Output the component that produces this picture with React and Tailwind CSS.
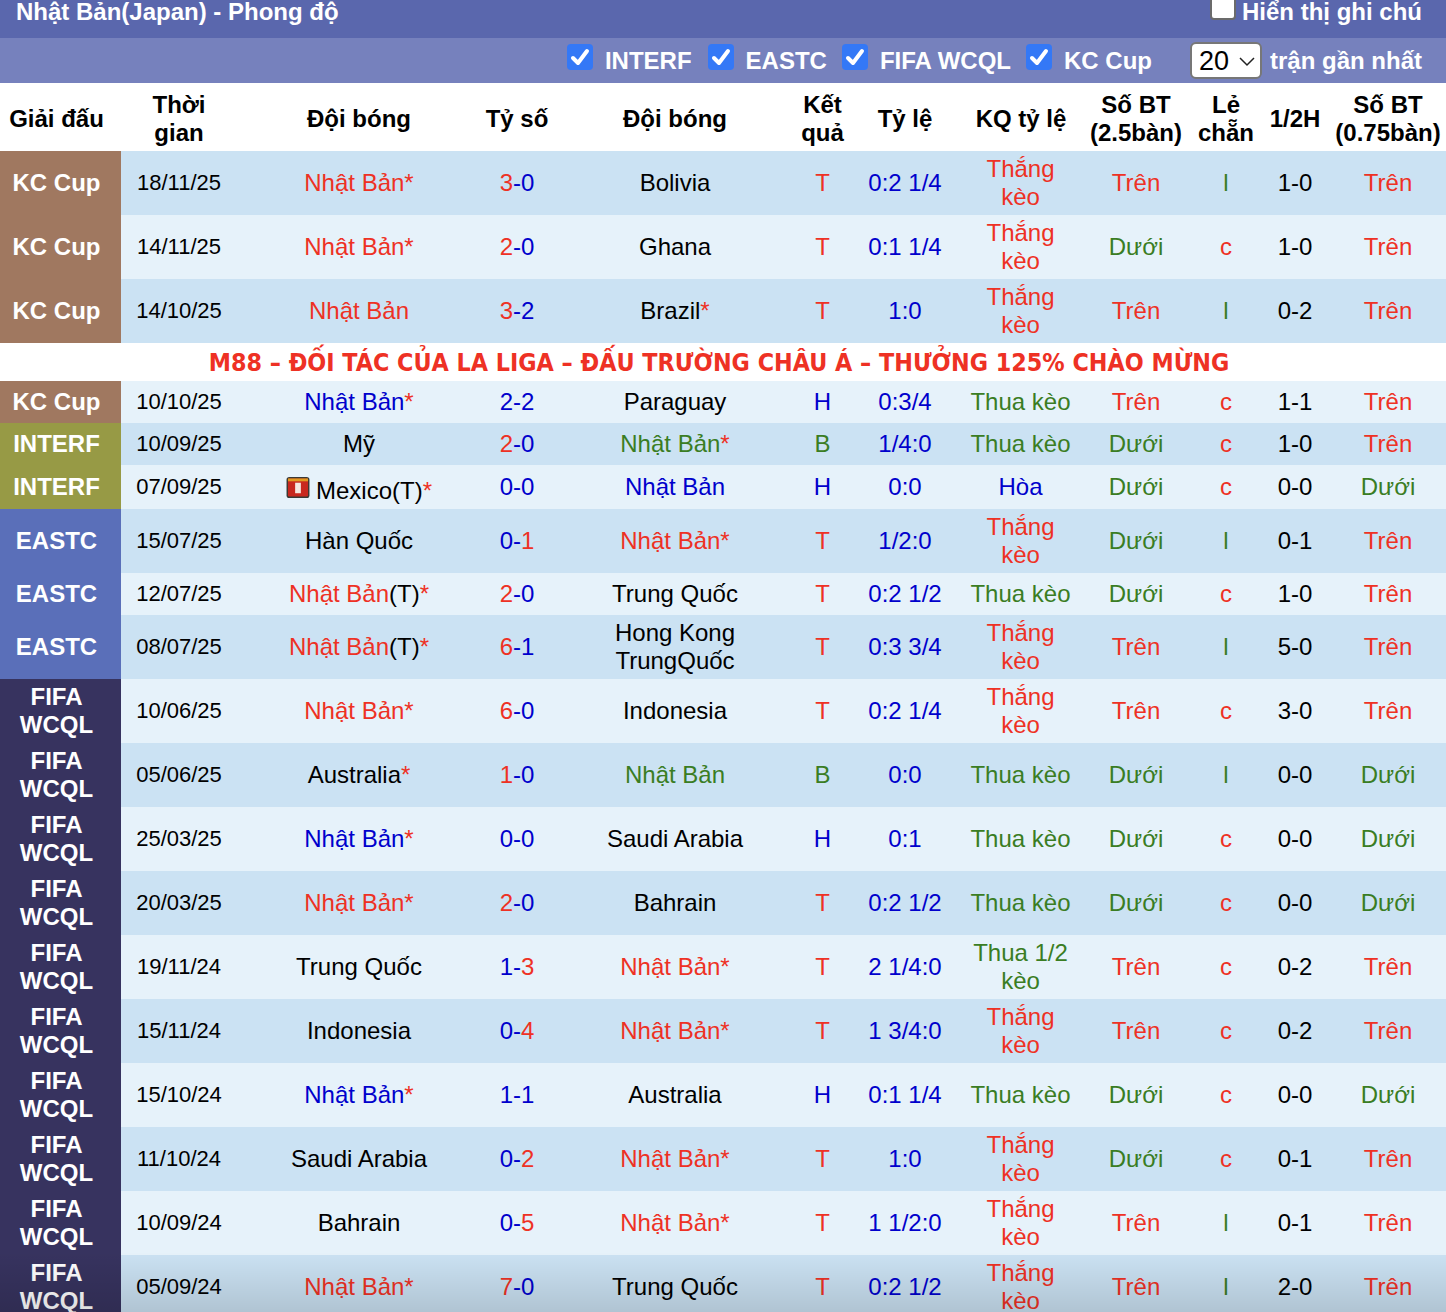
import React from "react";

const R = "#ee3124", B = "#0000cc", G = "#3a7d23", K = "#000000";
const C = { red: R, blue: B, green: G, black: K };
const LG = {
  K: ["KC Cup", "bg-[#a07860]"],
  I: ["INTERF", "bg-[#979a45]"],
  E: ["EASTC", "bg-[#5a6fb9]"],
  F: ["FIFA WCQL", "bg-[#37335f]"],
};
const rows = [
  ["K","18/11/25",["red","Nhật Bản*"],[3,0],["black","Bolivia"],"T","0:2 1/4","Thắng kèo","Trên","l","1-0","Trên",64],
  ["K","14/11/25",["red","Nhật Bản*"],[2,0],["black","Ghana"],"T","0:1 1/4","Thắng kèo","Dưới","c","1-0","Trên",64],
  ["K","14/10/25",["red","Nhật Bản"],[3,2],["black","Brazil*"],"T","1:0","Thắng kèo","Trên","l","0-2","Trên",64],
  "ad",
  ["K","10/10/25",["blue","Nhật Bản*"],[2,2],["black","Paraguay"],"H","0:3/4","Thua kèo","Trên","c","1-1","Trên",42],
  ["I","10/09/25",["black","Mỹ"],[2,0],["green","Nhật Bản*"],"B","1/4:0","Thua kèo","Dưới","c","1-0","Trên",42],
  ["I","07/09/25",["black","Mexico(T)*",true],[0,0],["blue","Nhật Bản"],"H","0:0","Hòa","Dưới","c","0-0","Dưới",44],
  ["E","15/07/25",["black","Hàn Quốc"],[0,1],["red","Nhật Bản*"],"T","1/2:0","Thắng kèo","Dưới","l","0-1","Trên",64],
  ["E","12/07/25",["redT","Nhật Bản"],[2,0],["black","Trung Quốc"],"T","0:2 1/2","Thua kèo","Dưới","c","1-0","Trên",42],
  ["E","08/07/25",["redT","Nhật Bản"],[6,1],["black","Hong Kong TrungQuốc"],"T","0:3 3/4","Thắng kèo","Trên","l","5-0","Trên",64],
  ["F","10/06/25",["red","Nhật Bản*"],[6,0],["black","Indonesia"],"T","0:2 1/4","Thắng kèo","Trên","c","3-0","Trên",64],
  ["F","05/06/25",["black","Australia*"],[1,0],["green","Nhật Bản"],"B","0:0","Thua kèo","Dưới","l","0-0","Dưới",64],
  ["F","25/03/25",["blue","Nhật Bản*"],[0,0],["black","Saudi Arabia"],"H","0:1","Thua kèo","Dưới","c","0-0","Dưới",64],
  ["F","20/03/25",["red","Nhật Bản*"],[2,0],["black","Bahrain"],"T","0:2 1/2","Thua kèo","Dưới","c","0-0","Dưới",64],
  ["F","19/11/24",["black","Trung Quốc"],[1,3],["red","Nhật Bản*"],"T","2 1/4:0","Thua 1/2 kèo","Trên","c","0-2","Trên",64],
  ["F","15/11/24",["black","Indonesia"],[0,4],["red","Nhật Bản*"],"T","1 3/4:0","Thắng kèo","Trên","c","0-2","Trên",64],
  ["F","15/10/24",["blue","Nhật Bản*"],[1,1],["black","Australia"],"H","0:1 1/4","Thua kèo","Dưới","c","0-0","Dưới",64],
  ["F","11/10/24",["black","Saudi Arabia"],[0,2],["red","Nhật Bản*"],"T","1:0","Thắng kèo","Dưới","c","0-1","Trên",64],
  ["F","10/09/24",["black","Bahrain"],[0,5],["red","Nhật Bản*"],"T","1 1/2:0","Thắng kèo","Trên","l","0-1","Trên",64],
  ["F","05/09/24",["red","Nhật Bản*"],[7,0],["black","Trung Quốc"],"T","0:2 1/2","Thắng kèo","Trên","l","2-0","Trên",64],
];
const stripe = [0,1,0,null,1,0,1,0,1,0,1,0,1,0,1,0,1,0,1,0];

function Check() {
  return (
    <span className="inline-flex h-[26px] w-[26px] items-center justify-center rounded-[4px] bg-[#3478f6]">
      <svg viewBox="0 0 24 24" className="h-[24px] w-[24px]" fill="none" stroke="#fff" strokeWidth="4" strokeLinecap="round" strokeLinejoin="round">
        <path d="M5 13l5 5L19 6" />
      </svg>
    </span>
  );
}

function Flag() {
  return (
    <svg viewBox="0 0 24 22" className="mr-[6px] inline-block h-[21px] w-[24px] align-[1px]">
      <rect x="0" y="0" width="24" height="22" rx="3" fill="#3a3a35" />
      <rect x="1.5" y="1.5" width="21" height="19" rx="1.5" fill="#c8281e" />
      <rect x="1.5" y="1.5" width="21" height="3" fill="#e09a20" />
      <rect x="9" y="6" width="6" height="11" fill="#f4e8e0" />
    </svg>
  );
}

function Team({ t }) {
  const [kind, text, flag] = t;
  if (kind === "redT") {
    return (
      <>
        <span className="text-[#ee3124]">{text}</span>(T)<span className="text-[#ee3124]">*</span>
      </>
    );
  }
  const star = text.endsWith("*");
  const base = star ? text.slice(0, -1) : text;
  const starRed = star && kind !== "red";
  return (
    <span style={{ color: C[kind] }} className={flag ? "relative top-[4px]" : ""}>
      {flag && <Flag />}
      {base}
      {star && <span className={starRed ? "text-[#ee3124]" : ""}>*</span>}
    </span>
  );
}

function Score({ s }) {
  const [a, b] = s;
  return (
    <span style={{ color: B }}>
      <span style={{ color: a > b ? R : B }}>{a}</span>-<span style={{ color: b > a ? R : B }}>{b}</span>
    </span>
  );
}

const colorResult = { T: R, H: B, B: G };
const colorKq = (v) => (v.startsWith("Thắng") ? R : v === "Hòa" ? B : G);
const colorOU = (v) => (v === "Trên" ? R : G);

const heads = ["Giải đấu","Thời gian","Đội bóng","Tỷ số","Đội bóng","Kết quả","Tỷ lệ","KQ tỷ lệ","Số BT (2.5bàn)","Lẻ chẵn","1/2H","Số BT (0.75bàn)"];
const widths = ["w-[121px]","w-[116px]","w-[244px]","w-[72px]","w-[244px]","w-[51px]","w-[114px]","w-[118px]","w-[112px]","w-[68px]","w-[70px]","w-[116px]"];

export default function App() {
  return (
    <div className="relative h-[1312px] w-[1446px] overflow-hidden bg-white font-['Liberation_Sans',Arial,sans-serif] text-[24px] leading-[28px] text-black">
      <div className="flex h-[38px] items-start justify-between bg-[#5a67ad] pl-[16px] pr-[24px] font-bold text-white">
        <span className="mt-[-2px]">Nhật Bản(Japan) - Phong độ</span>
        <span className="mt-[-2px] flex items-start gap-[6px]">
          <span className="mt-[-4px] h-[26px] w-[26px] rounded-[4px] border-2 border-[#6b6b6b] bg-white" />
          <span>Hiển thị ghi chú</span>
        </span>
      </div>
      <div className="flex h-[45px] items-center justify-end gap-[8px] bg-[#7681bd] pr-[24px] font-bold text-white">
        {[["INTERF","mr-[8px]"],["EASTC","mr-[7px]"],["FIFA WCQL","mr-[7px]"],["KC Cup","mr-[30px]"]].map(([l, m]) => (
          <span key={l} className={`flex items-center gap-[12px] ${m}`}>
            <span className="mt-[-8px] inline-flex"><Check /></span>
            <span className="mt-[1px]">{l}</span>
          </span>
        ))}
        <span className="flex h-[37px] w-[72px] shrink-0 items-center justify-between rounded-[6px] border-2 border-[#777] bg-white pl-[7px] pr-[5px] text-[27px] font-normal text-black">
          20
          <svg viewBox="0 0 16 16" className="h-[16px] w-[16px]" fill="none" stroke="#222" strokeWidth="1.5"><path d="M1 5l7 7 7-7" /></svg>
        </span>
        <span>trận gần nhất</span>
      </div>
      <table className="w-[1446px] table-fixed border-collapse">
        <colgroup>{widths.map((w, i) => <col key={i} className={w} />)}</colgroup>
        <thead>
          <tr className="h-[68px] bg-white">
            {heads.map((h, i) => (
              <th key={i} className={`p-0 pt-[4px] text-center align-middle font-bold ${i === 0 ? "pr-[8px]" : ""}`}>
                {i === 1 ? <span className="mx-auto block w-[80px]">{h}</span> : h}
              </th>
            ))}
          </tr>
        </thead>
        <tbody>
          {rows.map((r, i) => {
            if (r === "ad") {
              return (
                <tr key={i} className="h-[38px] bg-white">
                  <td colSpan={12} className="p-0 pr-[8px] pt-[2px] text-center align-middle font-['DejaVu_Sans',sans-serif] text-[24.8px] font-bold text-[#ee3124] [font-stretch:condensed]">
                    M88 – ĐỐI TÁC CỦA LA LIGA – ĐẤU TRƯỜNG CHÂU Á – THƯỞNG 125% CHÀO MỪNG
                  </td>
                </tr>
              );
            }
            const [lg, date, t1, sc, t2, res, odds, kq, ou, oe, half, ou2, h] = r;
            return (
              <tr key={i} style={{ height: h }} className={stripe[i] ? "bg-[#e6f2fa]" : "bg-[#cbe2f3]"}>
                <td className={`p-0 pr-[8px] text-center align-middle font-bold text-white ${LG[lg][1]}`}>
                  <span className={lg === "F" ? "mx-auto block w-[90px]" : ""}>{LG[lg][0]}</span>
                </td>
                <td className="p-0 text-center align-middle text-[22px]">{date}</td>
                <td className="p-0 text-center align-middle"><Team t={t1} /></td>
                <td className="p-0 text-center align-middle"><Score s={sc} /></td>
                <td className="p-0 text-center align-middle"><span className="mx-auto block w-[200px]"><Team t={t2} /></span></td>
                <td className="p-0 text-center align-middle" style={{ color: colorResult[res] }}>{res}</td>
                <td className="p-0 text-center align-middle text-[#0000cc]">{odds}</td>
                <td className="p-0 pr-[1px] text-center align-middle" style={{ color: colorKq(kq) }}>
                  <span className="mx-auto block w-[104px]">{kq}</span>
                </td>
                <td className="p-0 text-center align-middle" style={{ color: colorOU(ou) }}>{ou}</td>
                <td className="p-0 text-center align-middle" style={{ color: oe === "l" ? G : R }}>{oe}</td>
                <td className="p-0 text-center align-middle">{half}</td>
                <td className="p-0 text-center align-middle" style={{ color: colorOU(ou2) }}>{ou2}</td>
              </tr>
            );
          })}
        </tbody>
      </table>
      <div className="pointer-events-none absolute bottom-0 left-0 h-[60px] w-full bg-gradient-to-b from-transparent to-[#00000022]" />
    </div>
  );
}
